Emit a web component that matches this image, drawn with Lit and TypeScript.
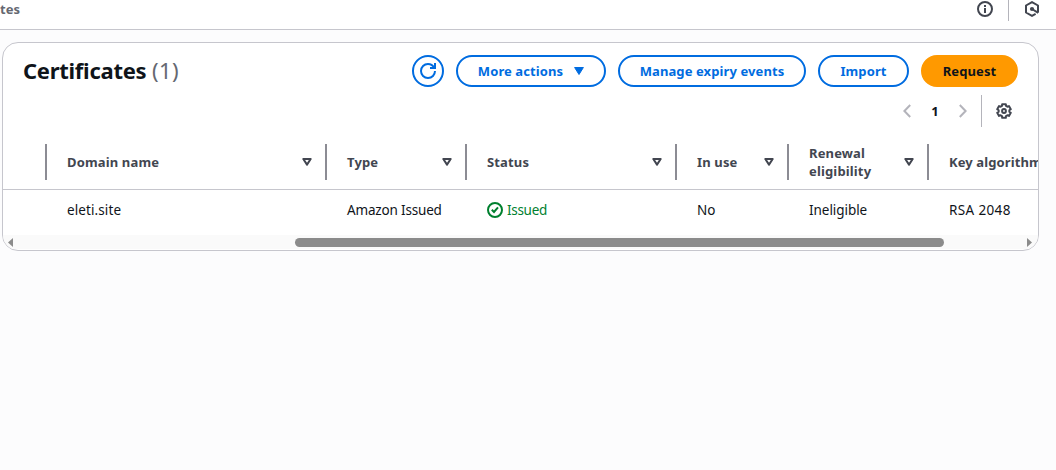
import { LitElement, html, css, svg, nothing } from "lit";
import { customElement } from "lit/decorators.js";

interface Column {
  key: string;
  label: string;
  value: string;
  width: number;
}

const COLUMNS: Column[] = [
  { key: "domain", label: "Domain name", value: "eleti.site", width: 280 },
  { key: "type", label: "Type", value: "Amazon Issued", width: 140 },
  { key: "status", label: "Status", value: "Issued", width: 210 },
  { key: "inuse", label: "In use", value: "No", width: 112 },
  { key: "renewal", label: "Renewal eligibility", value: "Ineligible", width: 140 },
  { key: "key", label: "Key algorithm", value: "RSA 2048", width: 140 },
];

/** Six-toothed gear outline centred in a 16px box. */
function gearPath(): string {
  const points: string[] = [];
  for (let tooth = 0; tooth < 6; tooth++) {
    const mid = tooth * 60 - 90;
    for (const [offset, radius] of [[-22, 5.4], [-15, 7], [15, 7], [22, 5.4]]) {
      const angle = ((mid + offset) * Math.PI) / 180;
      points.push(`${(8 + radius * Math.cos(angle)).toFixed(2)} ${(8 + radius * Math.sin(angle)).toFixed(2)}`);
    }
  }
  return `M${points.join("L")}Z`;
}

const infoIcon = svg`<svg width="16" height="16" viewBox="0 0 16 16" fill="none" stroke="#424650" stroke-width="2"><circle cx="8" cy="8" r="7"/><path d="M8 12V7M8 6V4"/></svg>`;
const hexIcon = svg`<svg width="16" height="16" viewBox="0 0 16 16" fill="none" stroke="#424650" stroke-width="2"><path d="M14 11.5V4.5L8 1.1 2 4.5v7L8 14.9l3.6-2" stroke-linejoin="round"/><path d="M8 8l6.2 3.8"/><circle cx="8" cy="8" r="2.1" fill="#424650" stroke="none"/></svg>`;
const refreshIcon = svg`<svg width="16" height="16" viewBox="0 0 16 16" fill="none" stroke="#006ce0" stroke-width="2"><path d="M10 5h5V0"/><path d="M15 8a6.96 6.96 0 0 1-7 7 6.96 6.96 0 0 1-7-7 6.96 6.96 0 0 1 7-7c2.6 0 4.8 1.4 6 3.6"/></svg>`;
const caretIcon = svg`<svg width="10" height="8" viewBox="0 0 10 8"><path d="M.6.5h8.8L5 7.5z" fill="#006ce0" stroke="#006ce0" stroke-linejoin="round"/></svg>`;
const sortIcon = svg`<svg width="10" height="8" viewBox="0 0 10 8"><path d="M1.3 1h7.4L5 6.6z" fill="none" stroke="#424650" stroke-width="2" stroke-linejoin="round"/></svg>`;
const prevIcon = svg`<svg width="8" height="14" viewBox="0 0 8 14"><path d="M7.2 1 1.4 7l5.8 6" fill="none" stroke="#b4b4bb" stroke-width="2"/></svg>`;
const nextIcon = svg`<svg width="8" height="14" viewBox="0 0 8 14"><path d="M.8 1l5.8 6-5.8 6" fill="none" stroke="#b4b4bb" stroke-width="2"/></svg>`;
const gearIcon = svg`<svg width="16" height="16" viewBox="0 0 16 16" fill="none" stroke="#424650" stroke-width="2" stroke-linejoin="round"><path d=${gearPath()}/><circle cx="8" cy="8" r="1.9"/></svg>`;
const successIcon = svg`<svg width="16" height="16" viewBox="0 0 16 16" fill="none" stroke="#00802f" stroke-width="2"><circle cx="8" cy="8" r="7"/><path d="M4.8 7.8 7 10l4-4.6"/></svg>`;

@customElement("app-root")
export class AppRoot extends LitElement {
  static styles = css`
    :host {
      display: block;
      height: 470px;
      overflow: hidden;
      background: #fcfcfd;
      font-family: "Noto Sans", "Open Sans", sans-serif;
      font-size: 14px;
      line-height: 20px;
      color: #0f141a;
    }
    * { box-sizing: border-box; }
    svg { display: block; flex: none; }
    .topbar {
      display: flex;
      height: 30px;
      background: #fff;
      border-bottom: 1px solid #c6c6cd;
      padding-right: 16px;
    }
    .crumb {
      flex: 1;
      font-weight: 700;
      font-size: 13px;
      line-height: 19px;
      color: #656871;
    }
    .tools { display: flex; align-items: flex-start; height: 21px; }
    .tools svg { margin-top: 1px; }
    .tools .rule { width: 1px; height: 21px; background: #b4b4bb; margin: 0 15px; }
    .panel {
      margin: 12px 0 0 2px;
      width: 1037px;
      height: 209px;
      border: 1px solid #c6c6cd;
      border-radius: 16px;
      background: #fff;
      overflow: hidden;
      display: flex;
      flex-direction: column;
    }
    .head { display: flex; height: 44px; padding: 12px 20px 0 20px; }
    h2 {
      flex: 1;
      margin: 0;
      font-size: 22px;
      line-height: 30px;
      font-weight: 700;
      white-space: nowrap;
    }
    .name { letter-spacing: -0.27px; }
    .count { font-weight: 400; color: #656871; letter-spacing: 0.4px; }
    .actions { display: flex; gap: 12px; }
    button {
      height: 32px;
      padding: 0;
      border: 2px solid #006ce0;
      border-radius: 16px;
      background: #fff;
      color: #006ce0;
      font: 700 13px/20px "Noto Sans", "Open Sans", sans-serif;
      display: flex;
      align-items: center;
      justify-content: center;
      white-space: nowrap;
      letter-spacing: 0.1px;
    }
    .refresh { width: 32px; }
    .more { width: 150px; gap: 11px; }
    .manage { width: 188px; }
    .import { width: 91px; }
    .request { width: 97px; background: #ff9900; border-color: #ff9900; color: #0f141a; }
    .pager {
      display: flex;
      align-items: center;
      justify-content: flex-end;
      height: 32px;
      margin-top: 8px;
      padding-right: 26px;
    }
    .page { width: 48px; text-align: center; font-weight: 700; font-size: 13px; }
    .split { width: 1px; height: 32px; background: #b4b4bb; margin: 0 14px; }
    .row { display: flex; flex: none; padding-left: 0; }
    .header { height: 63px; padding: 17px 0 9px; border-bottom: 1px solid #c6c6cd; color: #424650; }
    .lead { width: 44px; height: 36px; flex: none; }
    .header .lead { border-right: 2px solid #8c8c94; }
    .th {
      flex: none;
      display: flex;
      align-items: center;
      justify-content: space-between;
      height: 36px;
      padding: 0 13px 0 20px;
      border-right: 2px solid #8c8c94;
      font-weight: 700;
      font-size: 13px;
      line-height: 18px;
      letter-spacing: 0.15px;
    }
    .th.renewal span { width: 80px; }
    .th.key { white-space: nowrap; letter-spacing: 0.1px; }
    .body { height: 45px; }
    .td {
      flex: none;
      display: flex;
      align-items: center;
      gap: 4px;
      padding-left: 20px;
      height: 40px;
      font-size: 13.5px;
      white-space: nowrap;
    }
    .td.domain { letter-spacing: 0.1px; }
    .td.type { letter-spacing: -0.17px; }
    .td.renewal { letter-spacing: -0.05px; }
    .td.key { letter-spacing: 0.37px; }
    .td.status { color: #00802f; letter-spacing: -0.3px; }
    .scroll { display: flex; align-items: center; height: 14px; background: #fafafa; padding: 0 5px; }
    .thumb { width: 649px; height: 9px; border-radius: 5px; background: #8b8b8b; margin: 0 83px 0 282px; flex: none; }
  `;

  render() {
    return html`
      <div class="topbar">
        <div class="crumb">tes</div>
        <div class="tools">${infoIcon}<div class="rule"></div>${hexIcon}</div>
      </div>
      <section class="panel">
        <div class="head">
          <h2><span class="name">Certificates</span> <span class="count">(1)</span></h2>
          <div class="actions">
            <button class="refresh" aria-label="Refresh">${refreshIcon}</button>
            <button class="more"><span>More actions</span>${caretIcon}</button>
            <button class="manage"><span>Manage expiry events</span></button>
            <button class="import"><span>Import</span></button>
            <button class="request"><span>Request</span></button>
          </div>
        </div>
        <div class="pager">
          ${prevIcon}<span class="page">1</span>${nextIcon}
          <div class="split"></div>${gearIcon}
        </div>
        <div class="row header">
          <div class="lead"></div>
          ${COLUMNS.map((c) => html`<div class="th ${c.key}" style="width:${c.width}px"><span>${c.label}</span>${c.key === "key" ? nothing : sortIcon}</div>`)}
        </div>
        <div class="row body">
          <div class="lead"></div>
          ${COLUMNS.map((c) => html`<div class="td ${c.key}" style="width:${c.width}px">${c.key === "status" ? successIcon : nothing}<span>${c.value}</span></div>`)}
        </div>
        <div class="scroll">
          <svg width="5" height="9" viewBox="0 0 5 9"><path d="M5 0v9L0 4.5z" fill="#8b8b8b"/></svg>
          <div class="thumb"></div>
          <svg width="5" height="9" viewBox="0 0 5 9"><path d="M0 0v9l5-4.5z" fill="#8b8b8b"/></svg>
        </div>
      </section>
    `;
  }
}
